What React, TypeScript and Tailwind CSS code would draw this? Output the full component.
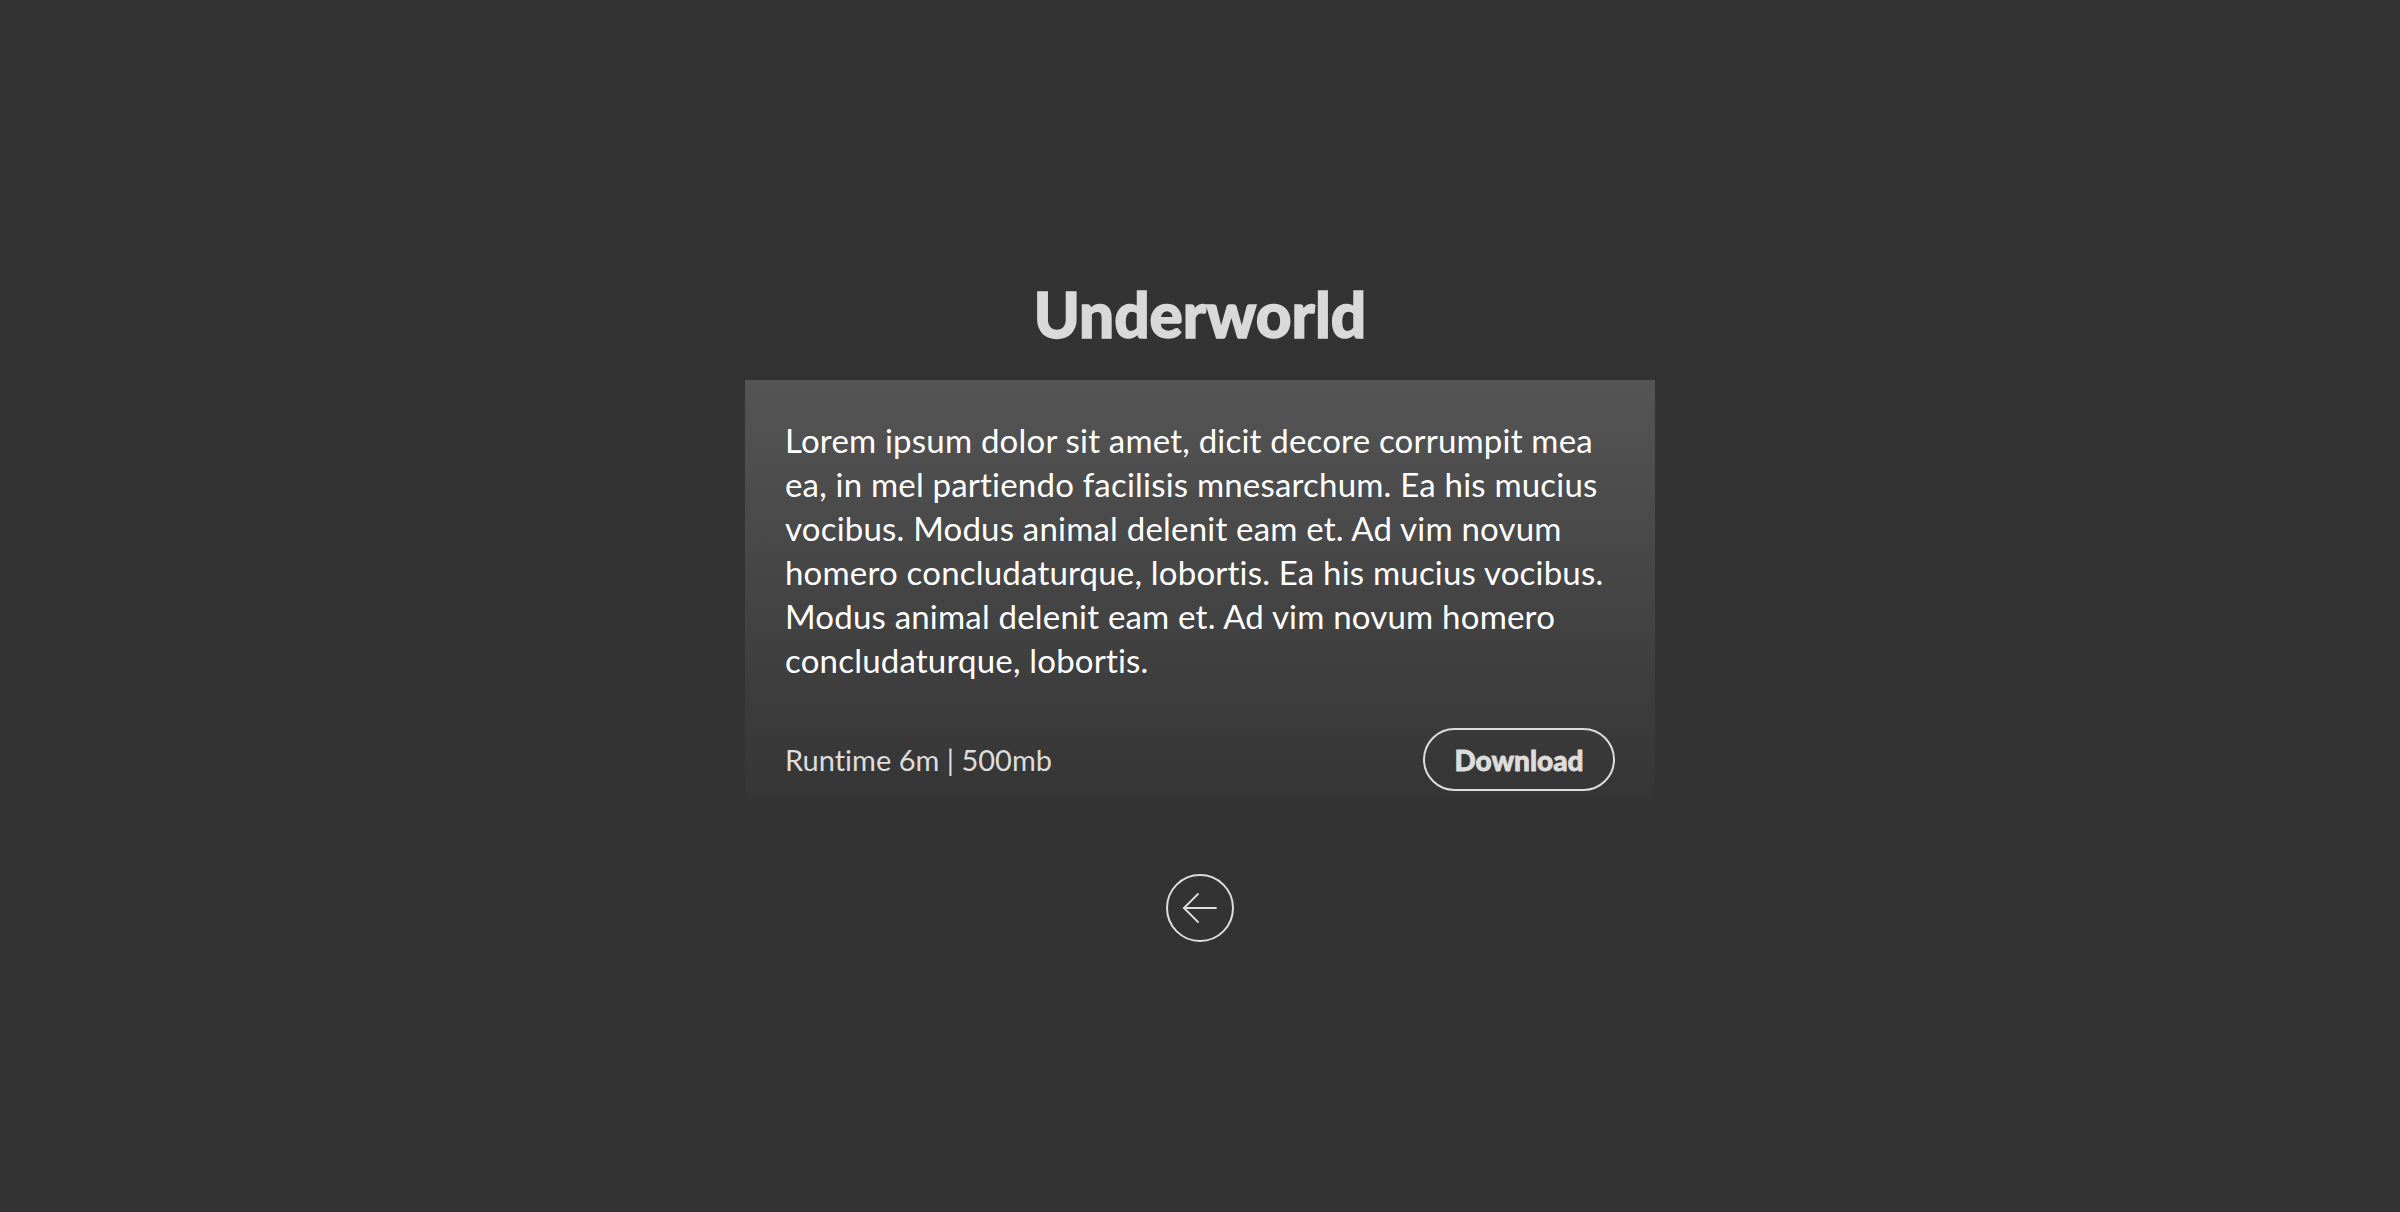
import React from "react";

export default function App() {
  return (
    <div
      className="min-h-screen w-full bg-[#333333] flex flex-col items-center [font-variant-ligatures:none]"
      style={{ fontFamily: "Lato, 'Noto Sans', sans-serif" }}
    >
      <h1 className="mt-[283px] text-[62px] leading-[62px] font-black text-[#d9d9d9] [-webkit-text-stroke:1.5px_#d9d9d9]">
        Underworld
      </h1>
      <div className="mt-[35px] w-[910px] bg-gradient-to-b from-[#555555] to-[#353535] px-[40px] pt-[38px] pb-[8px]">
        <p className="text-[33px] leading-[44px] tracking-[0.2px] text-white">
          Lorem ipsum dolor sit amet, dicit decore corrumpit mea ea, in mel partiendo facilisis mnesarchum. Ea his mucius vocibus. Modus animal delenit eam et. Ad vim novum homero concludaturque, lobortis. Ea his mucius vocibus. Modus animal delenit eam et. Ad vim novum homero concludaturque, lobortis.
        </p>
        <div className="mt-[46px] flex items-center justify-between">
          <span className="text-[29px] text-[#dddddd]">Runtime 6m | 500mb</span>
          <button className="h-[63px] w-[192px] rounded-full border-2 border-[#dddddd] text-[28px] font-black text-[#dddddd] [-webkit-text-stroke:0.8px_#dddddd]">
            Download
          </button>
        </div>
      </div>
      <button className="mt-[75px] flex h-[68px] w-[68px] items-center justify-center rounded-full border-2 border-[#dddddd]">
        <svg width="34" height="34" viewBox="0 0 34 34" fill="none" stroke="#dddddd" strokeWidth="1.8" strokeLinecap="round" strokeLinejoin="round">
          <path d="M33 17H1" />
          <path d="M15 3L1 17L15 31" />
        </svg>
      </button>
    </div>
  );
}
